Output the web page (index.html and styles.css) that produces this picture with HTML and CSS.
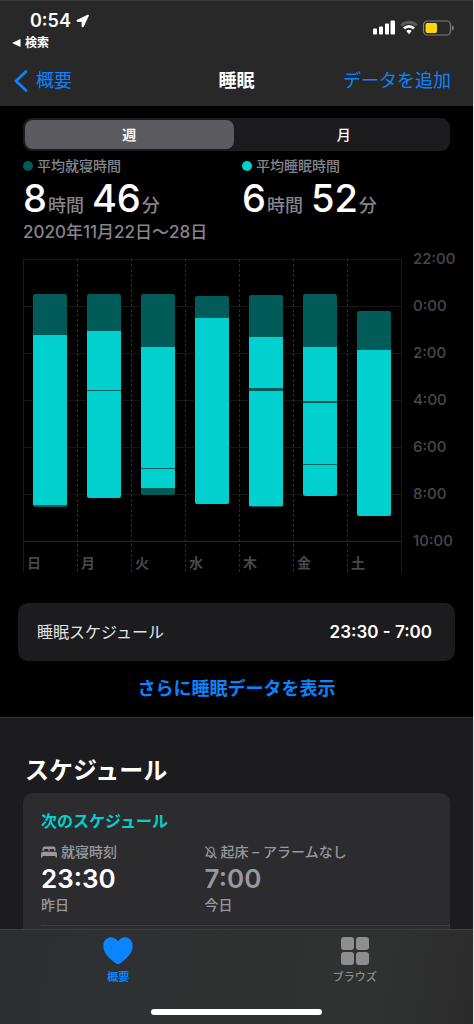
FILE: index.html
```html
<!DOCTYPE html>
<html lang="ja">
<head>
<meta charset="utf-8">
<meta name="viewport" content="width=device-width, initial-scale=1">
<title>睡眠</title>
<link rel="stylesheet" href="styles.css">
</head>
<body>
<header class="top">
  <div class="status">
    <div class="status-left">
      <div class="clock">0:54
        <svg width="13" height="14" viewBox="0 0 13 14" aria-hidden="true"><path d="M11.900 1 1 6.300q-.6.700.3 1.100l4.700.1.100 5q.5 1 1.200.2L12.500 1.600q.2-.8-.6-.6z" fill="#fff" stroke="#fff" stroke-width=".8" stroke-linejoin="round"/></svg>
      </div>
      <a class="return" href="#"><svg width="9" height="8" viewBox="0 0 9 8" aria-hidden="true"><path d="M0 4 8.500 0v8z" fill="#fff"/></svg>検索</a>
    </div>
    <svg class="indicators" width="82" height="16" viewBox="0 0 82 16" aria-hidden="true">
      <g fill="#fff"><rect x="1" y="8.500" width="4" height="6" rx="1"/><rect x="7" y="6.500" width="4" height="8" rx="1"/><rect x="13" y="3.500" width="4" height="11" rx="1"/><rect x="18.500" y=".5" width="4.500" height="14" rx="1"/></g>
      <g fill="none" stroke-width="2.800"><path d="M29.300 5.400a11 11 0 0 1 15.400 0" stroke="#5c5c5e"/><path d="M32 8.500a7 7 0 0 1 10 0" stroke="#fff"/></g>
      <path d="M34.300 11.100a4 4 0 0 1 5.400 0L37 14.300z" fill="#fff"/>
      <rect x="51.500" y="1" width="27" height="14" rx="4" fill="none" stroke="#7d7d7f" stroke-width="1.200"/>
      <rect x="53.500" y="3" width="11.500" height="10" rx="2" fill="#ffd60a"/>
      <path d="M80 5.500q2 .5 2 2.500t-2 2.500z" fill="#7d7d7f"/>
    </svg>
  </div>
  <nav class="nav">
    <a class="back" href="#"><svg width="14" height="22" viewBox="0 0 14 22" aria-hidden="true"><path d="M12 1.500 2 11l10 9.500" fill="none" stroke="#0a84ff" stroke-width="2.800" stroke-linecap="round" stroke-linejoin="round"/></svg>概要</a>
    <h1>睡眠</h1>
    <a class="add" href="#">データを追加</a>
  </nav>
</header>

<main>
  <section class="sleep">
    <div class="segmented">
      <button type="button" class="selected">週</button>
      <button type="button">月</button>
    </div>
    <div class="stats">
      <div>
        <p class="legend"><i class="dot dark"></i>平均就寝時間</p>
        <p class="value"><b>8</b><span>時間</span><b class="next">46</b><span>分</span></p>
      </div>
      <div>
        <p class="legend"><i class="dot"></i>平均睡眠時間</p>
        <p class="value"><b>6</b><span>時間</span><b class="next">52</b><span>分</span></p>
      </div>
    </div>
    <p class="date">2020年11月22日〜28日</p>

    <div class="chart">
      <div class="plot">
        <div class="day"><div class="track" style="padding-top:35px"><div class="bar"><i class="bed" style="height:41px"></i><i style="height:170px"></i><i class="bed" style="height:2px"></i></div></div><span>日</span></div>
        <div class="day"><div class="track" style="padding-top:35px"><div class="bar"><i class="bed" style="height:37px"></i><i style="height:59px"></i><i class="bed" style="height:1px"></i><i style="height:107px"></i></div></div><span>月</span></div>
        <div class="day"><div class="track" style="padding-top:35px"><div class="bar"><i class="bed" style="height:53px"></i><i style="height:121px"></i><i class="bed" style="height:1px"></i><i style="height:19px"></i><i class="bed" style="height:7px"></i></div></div><span>火</span></div>
        <div class="day"><div class="track" style="padding-top:37px"><div class="bar"><i class="bed" style="height:22px"></i><i style="height:186px"></i></div></div><span>水</span></div>
        <div class="day"><div class="track" style="padding-top:36px"><div class="bar"><i class="bed" style="height:42px"></i><i style="height:51px"></i><i class="bed" style="height:3px"></i><i style="height:115px"></i><i class="bed" style="height:1px"></i></div></div><span>木</span></div>
        <div class="day"><div class="track" style="padding-top:35px"><div class="bar"><i class="bed" style="height:53px"></i><i style="height:54px"></i><i class="bed" style="height:2px"></i><i style="height:61px"></i><i class="bed" style="height:1px"></i><i style="height:31px"></i></div></div><span>金</span></div>
        <div class="day"><div class="track" style="padding-top:52px"><div class="bar"><i class="bed" style="height:39px"></i><i style="height:166px"></i></div></div><span>土</span></div>
      </div>
      <div class="axis"><span>22:00</span><span>0:00</span><span>2:00</span><span>4:00</span><span>6:00</span><span>8:00</span><span>10:00</span></div>
    </div>

    <div class="row"><span>睡眠スケジュール</span><strong>23:30 - 7:00</strong></div>
    <a class="more" href="#">さらに睡眠データを表示</a>
  </section>

  <section class="schedule">
    <h2>スケジュール</h2>
    <div class="card">
      <h3>次のスケジュール</h3>
      <div class="times">
        <div>
          <p class="label"><svg width="16" height="12" viewBox="0 0 16 12" aria-hidden="true"><path d="M1.500 5V2.500Q1.500.5 3.500.5h9q2 0 2 2V5h-1.300V4q0-1-1-1H9.500q-1 0-1 1v1h-1V4q0-1-1-1H3.800q-1 0-1 1v1zM2 5.800h12q2 0 2 2V11.500h-1.500V10h-13v1.500H0V7.800q0-2 2-2z" fill="#98989f"/></svg><span>就寝時刻</span></p>
          <p class="time">23:30</p>
          <p class="when">昨日</p>
        </div>
        <div>
          <p class="label"><svg width="12" height="13" viewBox="0 0 12 13" aria-hidden="true"><g fill="none" stroke="#98989f" stroke-width="1.200" stroke-linecap="round" stroke-linejoin="round"><path d="M.6.8 11.200 12M4.200 2.300Q5.100 1 6 1q3 .3 3 4 0 2 .8 3.200M3 4.200Q3.200 8 1 9.800h6.500M4.700 10.500q1.300 2.500 2.600 0"/></g></svg><span>起床 – アラームなし</span></p>
          <p class="time off">7:00</p>
          <p class="when">今日</p>
        </div>
      </div>
    </div>
  </section>
</main>

<footer class="tabs">
  <nav>
    <a class="active" href="#"><svg width="30" height="28" viewBox="0 0 30 28" aria-hidden="true"><path d="M15 4.200C13 1.500 10.500.3 8 .3 3.500.3.300 3.800.3 9c0 8 8.200 14.300 13 17.600q1.700 1.100 3.400 0C21.500 23.300 29.700 17 29.700 9c0-5.200-3.200-8.700-7.700-8.700-2.500 0-5 1.200-7 3.900z" fill="#0a84ff"/></svg>概要</a>
    <a href="#"><svg width="28" height="28" viewBox="0 0 28 28" aria-hidden="true"><g fill="#8e8e8e"><rect width="13" height="13" rx="3"/><rect x="15" width="13" height="13" rx="3"/><rect y="15" width="13" height="13" rx="3"/><rect x="15" y="15" width="13" height="13" rx="3"/></g></svg>ブラウズ</a>
  </nav>
  <div class="home"></div>
</footer>
</body>
</html>
```

FILE: styles.css
```css
* { box-sizing: border-box; }

body {
  margin: 0;
  height: 100vh;
  display: flex;
  flex-direction: column;
  overflow: hidden;
  background: #000;
  border-right: 1px solid #e6e6e6;
  color: #fff;
  font-family: Inter, "Noto Sans CJK JP", sans-serif;
}

h1, h2, h3, p { margin: 0; }
a { color: #0a84ff; text-decoration: none; }
svg { flex: none; }

/* Header */
.top {
  flex: none;
  background: #282829;
  border-top: 1px solid #38383a;
}
.status {
  display: flex;
  justify-content: space-between;
  align-items: center;
  padding: 9px 19px 0 12px;
}
.clock {
  display: flex;
  align-items: center;
  gap: 5px;
  padding-left: 18px;
  font-size: 18px;
  font-weight: 600;
  line-height: 22px;
}
.return {
  display: flex;
  align-items: center;
  gap: 4px;
  color: #fff;
  font-size: 12px;
  font-weight: 700;
  line-height: 22px;
}
.indicators { margin-top: -8px; }
.nav {
  display: grid;
  grid-template-columns: 1fr auto 1fr;
  align-items: center;
  padding: 14px 14px 12px;
  font-size: 18px;
  line-height: 26px;
}
.back { display: flex; align-items: center; gap: 8px; }
.nav h1 { font-size: 18px; font-weight: 700; }
.add { padding-right: 8px; text-align: right; }

main {
  flex: 1;
  min-height: 0;
  display: flex;
  flex-direction: column;
  overflow: hidden;
}

/* Sleep summary */
.sleep { flex: none; padding: 12px 18px 16px; }
.segmented {
  display: flex;
  gap: 6px;
  margin: 0 5px 5px;
  padding: 2px;
  border-radius: 9px;
  background: #1c1c1e;
}
.segmented button {
  flex: 1;
  height: 29px;
  padding: 0;
  border: 0;
  border-radius: 8px;
  background: none;
  color: #fff;
  font: 500 14px/20px Inter, "Noto Sans CJK JP", sans-serif;
}
.segmented .selected { background: #5b5b60; font-weight: 700; }
.stats {
  display: grid;
  grid-template-columns: 1fr 1fr;
  column-gap: 6px;
  padding-left: 5px;
}
.legend {
  display: flex;
  align-items: center;
  gap: 4px;
  color: #85858b;
  font-size: 14px;
  font-weight: 500;
  line-height: 20px;
}
.dot { width: 10px; height: 10px; border-radius: 50%; background: #00d1ce; }
.dot.dark { background: #005b59; }
.value {
  display: flex;
  align-items: baseline;
  color: #85858b;
  font-size: 18px;
  font-weight: 500;
  line-height: 20px;
}
.value b { color: #fff; font-size: 38px; font-weight: 500; line-height: 44px; }
.value .next { margin-left: 8px; }
.value span { margin-left: 1px; }
.date {
  padding-left: 5px;
  color: #85858b;
  font-size: 17px;
  font-weight: 500;
  line-height: 24px;
}

/* Chart: 282px of track covers twelve hours */
.chart {
  display: flex;
  gap: 11px;
  margin: 15px 0 0 5px;
}
.plot {
  flex: 1;
  display: grid;
  grid-template-columns: repeat(7, 1fr);
  border-right: 1px solid #1d1d1f;
  background: repeating-linear-gradient(#171718 0 1px, transparent 1px 47px);
  background-size: 100% 283px;
  background-repeat: no-repeat;
}
.day { border-left: 1px dashed #2b2b2d; }
.day:first-child { border-left: 1px solid #1d1d1f; }
.track { height: 282px; }
.bar {
  margin: 0 10px 0 9px;
  border-radius: 2px;
  overflow: hidden;
  box-shadow: 0 0 0 1px #000;
}
.bar i { display: block; background: #00d1ce; }
.bar .bed { background: #005b59; }
.day span {
  display: block;
  padding: 12px 0 0 3px;
  border-top: 1px solid #262628;
  color: #48484b;
  font-size: 14px;
  font-weight: 700;
  line-height: 18px;
}
.axis {
  display: flex;
  flex-direction: column;
  justify-content: space-between;
  width: 42px;
  height: 302px;
  margin-top: -10px;
  color: #48484b;
  font-size: 15px;
  font-weight: 500;
  line-height: 20px;
}

.row {
  display: flex;
  justify-content: space-between;
  align-items: center;
  margin: 31px 0 16px;
  padding: 17px 23px 17px 19px;
  border-radius: 10px;
  background: #1c1c1e;
  font-size: 16px;
  line-height: 24px;
}
.row span { color: #e4e4e6; }
.row strong { font-size: 17px; font-weight: 600; }
.more {
  display: block;
  font-size: 18px;
  font-weight: 700;
  line-height: 24px;
  text-align: center;
}

/* Schedule */
.schedule {
  flex: 1;
  padding: 37px 23px 0;
  border-top: 1px solid #343436;
  background: #1c1c1e;
}
.schedule h2 {
  padding-left: 2px;
  font-size: 24px;
  font-weight: 700;
  line-height: 32px;
}
.card {
  margin-top: 6px;
  padding: 16px 0 20px 18px;
  border-radius: 10px;
  background: #2c2c2e;
}
.card h3 {
  margin-bottom: 9px;
  color: #00d1ce;
  font-size: 16px;
  font-weight: 700;
  line-height: 24px;
}
.times {
  display: grid;
  grid-template-columns: 2fr 3fr;
  padding-bottom: 10px;
  border-bottom: 1px solid #3d3d3f;
}
.label, .when {
  display: flex;
  align-items: center;
  gap: 4px;
  color: #98989f;
  font-size: 14px;
  font-weight: 500;
  line-height: 20px;
}
.time { font-size: 26px; font-weight: 600; line-height: 33px; }
.time.off { color: #98989f; }

/* Tab bar */
.tabs {
  flex: none;
  padding: 7px 0 9px;
  border-top: 1px solid #3f4042;
  background: linear-gradient(100deg, #2c2d2e, #2d3134 22%, #2f3030 45%, #303131 80%, #2b2b2b);
}
.tabs nav { display: flex; }
.tabs a {
  flex: 1;
  display: flex;
  flex-direction: column;
  align-items: center;
  gap: 4px;
  color: #8e8e8e;
  font-size: 11px;
  font-weight: 500;
  line-height: 16px;
}
.tabs .active { color: #0a84ff; font-weight: 700; }
.home {
  width: 36%;
  height: 6px;
  margin: 24px auto 0;
  border-radius: 3px;
  background: #fff;
}
```
